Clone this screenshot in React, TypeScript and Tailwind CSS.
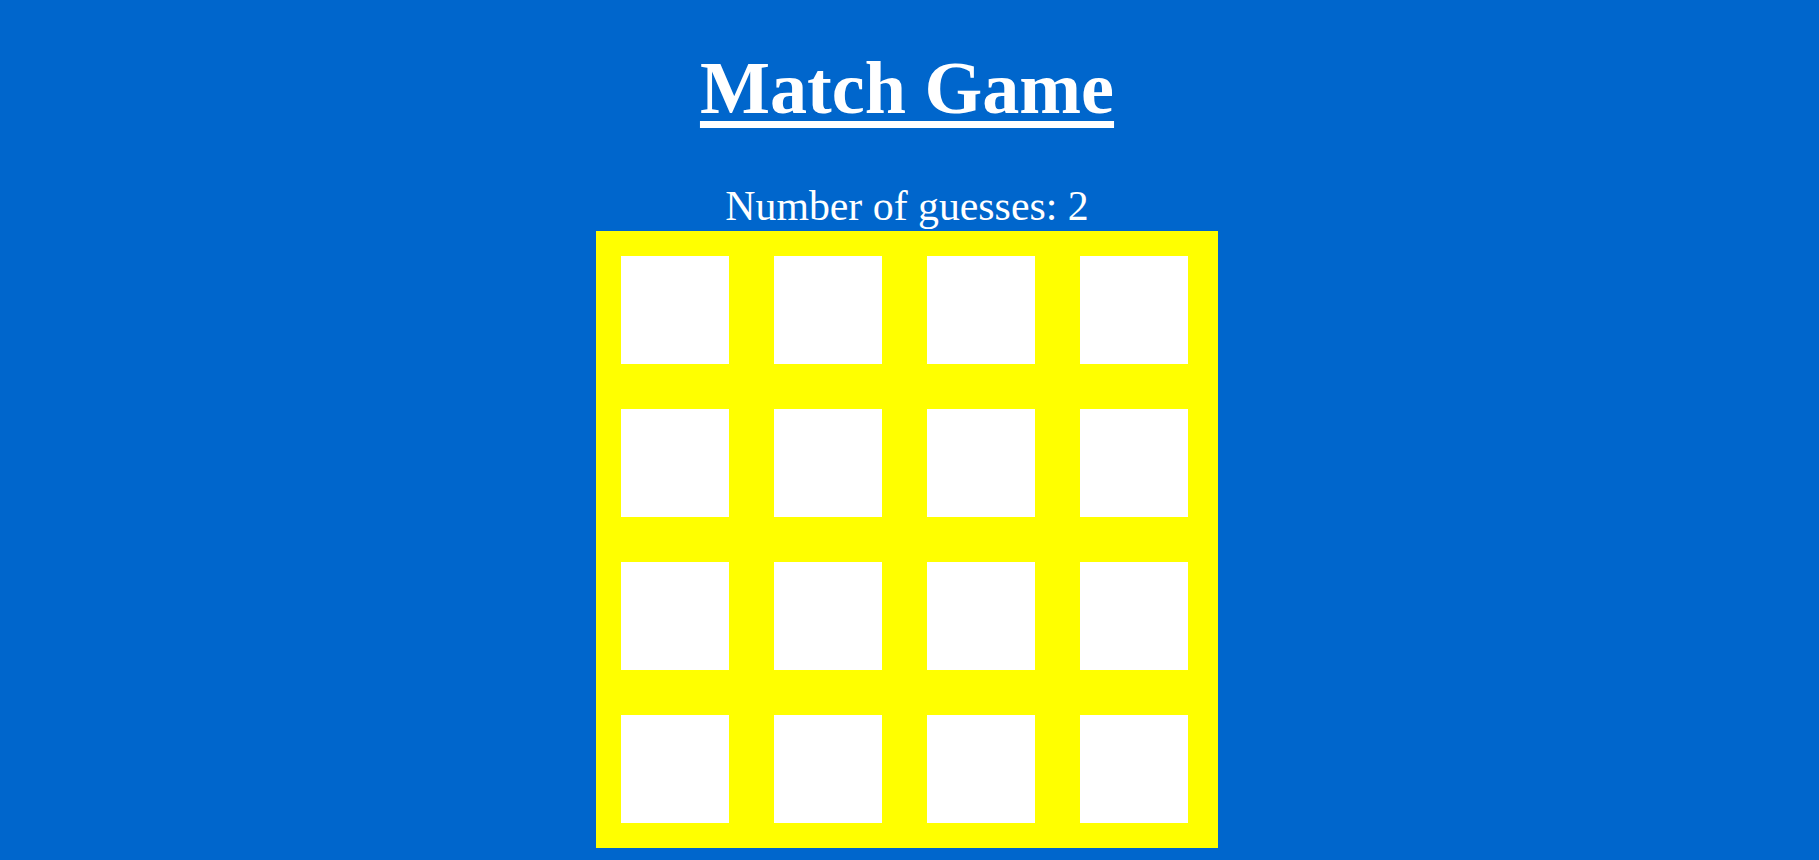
import React from 'react';

const cards = Array.from({ length: 16 }, (_, i) => i);

export default function App() {
  return (
    <div className="flex min-h-screen flex-col items-center bg-[#0066cc] pr-[5px] font-['Liberation_Serif','Times_New_Roman',serif] text-white">
      {/* Title */}
      <h1 className="mt-[47px] text-[74.2px] font-bold leading-[82px] underline decoration-[7px] underline-offset-[8px]">
        Match Game
      </h1>

      {/* Score */}
      <p className="mt-[53px] text-[41.8px] leading-[49px]">Number of guesses: 2</p>

      {/* Board */}
      <div className="grid w-[622px] grid-cols-[repeat(4,108px)] gap-[45px] bg-[#ffff00] pb-[25px] pl-[25px] pr-[30px] pt-[25px]">
        {cards.map((c) => (
          <div key={c} className="h-[108px] w-[108px] bg-white" />
        ))}
      </div>
    </div>
  );
}
